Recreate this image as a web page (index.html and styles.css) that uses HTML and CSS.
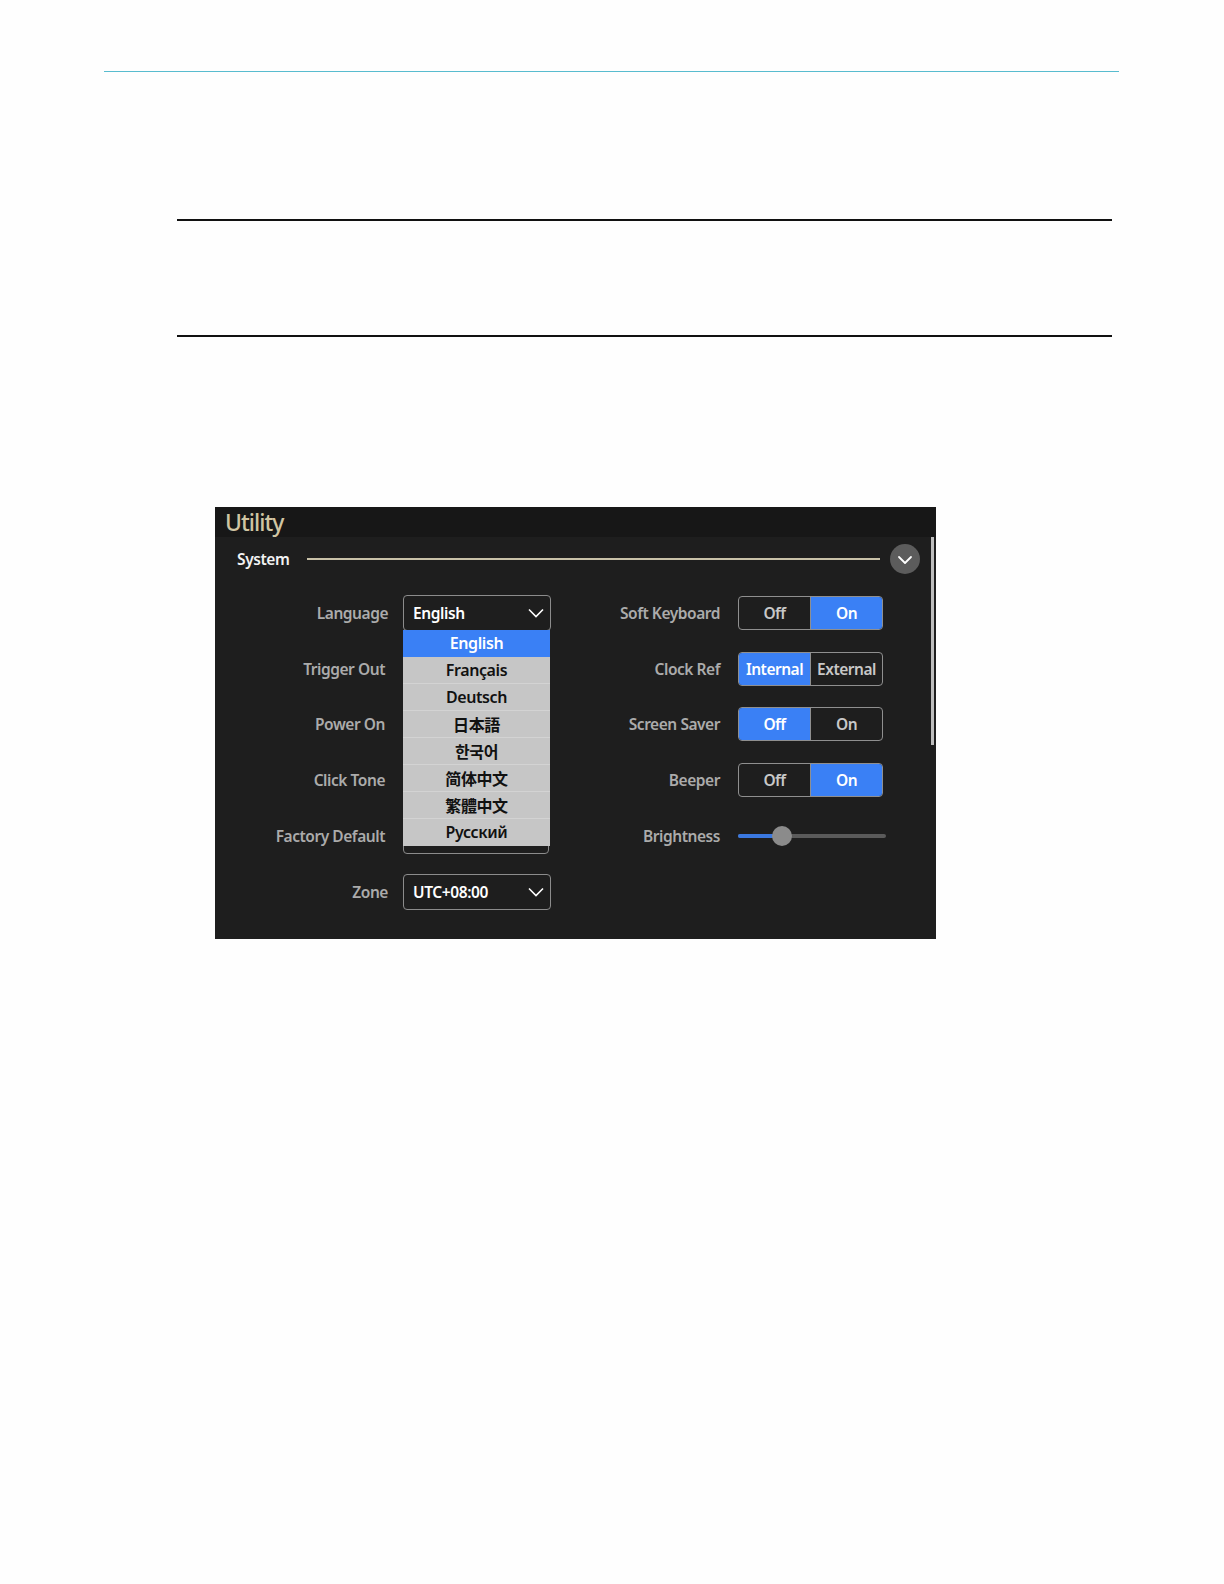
FILE: index.html
```html
<!DOCTYPE html>
<html>
<head lang="en">
    <meta charset="UTF-8">
    <title>Utility - System</title>
    <link rel="stylesheet" href="styles.css">
</head>
<body>
<div id="page">
    <div class="topline"></div>
    <div class="rule rule-first"></div>
    <div class="rule rule-second"></div>

    <div id="panel">
        <div class="title">Utility</div>
        <div class="section">
            <span class="section-name">System</span>
            <span class="section-line"></span>
            <span class="collapse">
                <svg width="16" height="10" viewBox="0 0 16 10"><path d="M2 2 L8 8 L14 2" fill="none" stroke="#fff" stroke-width="1.8" stroke-linecap="round" stroke-linejoin="round"/></svg>
            </span>
        </div>
        <div class="scrollbar"></div>

        <div class="grid">
            <!-- row 1 -->
            <div class="label">Language</div>
            <div class="cell">
                <div class="select">
                    <span>English</span>
                    <svg width="16" height="10" viewBox="0 0 16 10"><path d="M1 1.5 L8 8.5 L15 1.5" fill="none" stroke="#fff" stroke-width="1.6"/></svg>
                </div>
                <ul class="dropdown">
                    <li class="selected">English</li>
                    <li>Français</li>
                    <li>Deutsch</li>
                    <li lang="ja">日本語</li>
                    <li lang="ko">한국어</li>
                    <li lang="zh-CN">简体中文</li>
                    <li lang="zh-TW">繁體中文</li>
                    <li>Русский</li>
                </ul>
            </div>
            <div class="label label-right">Soft Keyboard</div>
            <div class="cell">
                <div class="toggle"><span>Off</span><span class="on">On</span></div>
            </div>

            <!-- row 2: control hidden under the open list -->
            <div class="label label-inner">Trigger Out</div>
            <div class="cell"><div class="toggle toggle-wide"><span></span><span></span></div></div>
            <div class="label label-right">Clock Ref</div>
            <div class="cell">
                <div class="toggle"><span class="on">Internal</span><span>External</span></div>
            </div>

            <!-- row 3 -->
            <div class="label label-inner">Power On</div>
            <div class="cell"><div class="toggle toggle-wide"><span></span><span></span></div></div>
            <div class="label label-right">Screen Saver</div>
            <div class="cell">
                <div class="toggle"><span class="on">Off</span><span>On</span></div>
            </div>

            <!-- row 4 -->
            <div class="label label-inner">Click Tone</div>
            <div class="cell"><div class="toggle toggle-wide"><span></span><span></span></div></div>
            <div class="label label-right">Beeper</div>
            <div class="cell">
                <div class="toggle"><span>Off</span><span class="on">On</span></div>
            </div>

            <!-- row 5 -->
            <div class="label label-inner">Factory Default</div>
            <div class="cell"><div class="button"></div></div>
            <div class="label label-right">Brightness</div>
            <div class="cell">
                <div class="slider">
                    <div class="slider-fill" style="width: 44px"></div>
                    <div class="slider-thumb" style="left: 34px"></div>
                </div>
            </div>

            <!-- row 6 -->
            <div class="label">Zone</div>
            <div class="cell">
                <div class="select">
                    <span>UTC+08:00</span>
                    <svg width="16" height="10" viewBox="0 0 16 10"><path d="M1 1.5 L8 8.5 L15 1.5" fill="none" stroke="#fff" stroke-width="1.6"/></svg>
                </div>
            </div>
            <div class="label label-right"></div>
            <div class="cell"></div>
        </div>
    </div>
</div>
</body>
</html>
```
FILE: styles.css
```css
*{
    padding: 0;
    margin: 0;
    box-sizing: border-box;
}
ul{
    list-style: none;
}
body{
    background: #fefefe;
    font-family: "Noto Sans", "Noto Sans CJK SC", sans-serif;
}
#page{
    padding-top: 71px;
    height: 1584px;
}
.topline{
    height: 1px;
    background: #58bccf;
    margin: 0 105px 0 104px;
}
.rule{
    height: 2px;
    background: #111;
    margin: 0 112px 0 177px;
}
.rule-first{
    margin-top: 147px;
}
.rule-second{
    margin-top: 114px;
}

/* panel */
#panel{
    position: relative;
    margin: 170px 0 0 215px;
    width: 721px;
    height: 432px;
    background: #1e1e1e;
}
.title{
    height: 30px;
    background: #171717;
    color: #d0c5a3;
    font-size: 23px;
    font-weight: 500;
    line-height: 30px;
    padding-left: 10px;
    letter-spacing: -1px;
}
.section{
    display: flex;
    align-items: center;
    height: 44px;
    padding: 0 16px 0 22px;
}
.section-name{
    color: #f2f2f2;
    font-size: 15.5px;
    font-weight: 600;
    letter-spacing: -0.4px;
}
.section-line{
    flex: 1;
    height: 2px;
    background: #c9c1a8;
    margin: 0 10px 0 17px;
}
.collapse{
    width: 30px;
    height: 30px;
    border-radius: 50%;
    background: #5c5c5c;
    display: flex;
    align-items: center;
    justify-content: center;
}
.collapse svg{
    margin-top: 1px;
}
.scrollbar{
    position: absolute;
    right: 2px;
    top: 30px;
    width: 3px;
    height: 208px;
    background: #bdbdbd;
}

/* rows */
.grid{
    display: grid;
    grid-template-columns: 188px 148px 187px 145px;
    grid-auto-rows: 55.8px;
    margin-top: 4px;
}
.label{
    display: flex;
    align-items: center;
    justify-content: flex-end;
    padding-right: 15px;
    color: #ababab;
    font-size: 15.5px;
    font-weight: 600;
    letter-spacing: -0.45px;
}
.label-inner{
    padding-right: 18px;
}
.label-right{
    padding-right: 18px;
}
.cell{
    position: relative;
    display: flex;
    align-items: center;
}
.select{
    width: 148px;
    height: 36px;
    border: 1px solid #8c8c8c;
    border-radius: 4px;
    display: flex;
    align-items: center;
    justify-content: space-between;
    padding: 0 6px 0 9px;
    color: #fff;
    font-size: 15.5px;
    font-weight: 600;
    letter-spacing: -0.4px;
}
.toggle{
    width: 145px;
    height: 34px;
    border: 1px solid #8f8f8f;
    border-radius: 4px;
    display: flex;
    overflow: hidden;
}
.toggle span{
    flex: 1;
    display: flex;
    align-items: center;
    justify-content: center;
    color: #c8c8c8;
    font-size: 15.5px;
    font-weight: 600;
    letter-spacing: -0.5px;
}
.toggle span + span{
    border-left: 1px solid #8f8f8f;
}
.toggle span.on{
    background: #3a80f5;
    color: #fff;
}
.toggle-wide{
    width: 146px;
}
.button{
    width: 146px;
    height: 36px;
    border: 1px solid #8c8c8c;
    border-radius: 4px;
}
.dropdown{
    position: absolute;
    left: 0;
    top: 45px;
    width: 147px;
    background: #c6c6c6;
    z-index: 10;
}
.dropdown li{
    height: 27px;
    line-height: 26px;
    text-align: center;
    color: #111;
    font-size: 16px;
    font-weight: 600;
    letter-spacing: -0.4px;
    border-bottom: 1px solid #d3d3d3;
}
.dropdown li:last-child{
    border-bottom: none;
}
.dropdown li.selected{
    background: #3a80f5;
    color: #fff;
    border-bottom-color: #3a80f5;
}
.dropdown li[lang="ja"]{
    font-family: "Noto Sans CJK JP", sans-serif;
    font-weight: 700;
}
.dropdown li[lang="ko"]{
    font-family: "Noto Sans CJK KR", sans-serif;
    font-weight: 700;
}
.dropdown li[lang="zh-CN"]{
    font-family: "Noto Sans CJK SC", sans-serif;
    font-weight: 700;
}
.dropdown li[lang="zh-TW"]{
    font-family: "Noto Sans CJK TC", sans-serif;
    font-weight: 700;
}
.slider{
    position: relative;
    flex-shrink: 0;
    width: 148px;
    height: 4px;
    background: #5a5a5a;
    border-radius: 2px;
}
.slider-fill{
    height: 4px;
    background: #3a78e0;
    border-radius: 2px;
}
.slider-thumb{
    position: absolute;
    top: -8px;
    width: 20px;
    height: 20px;
    border-radius: 50%;
    background: #8b8b8b;
}
```
